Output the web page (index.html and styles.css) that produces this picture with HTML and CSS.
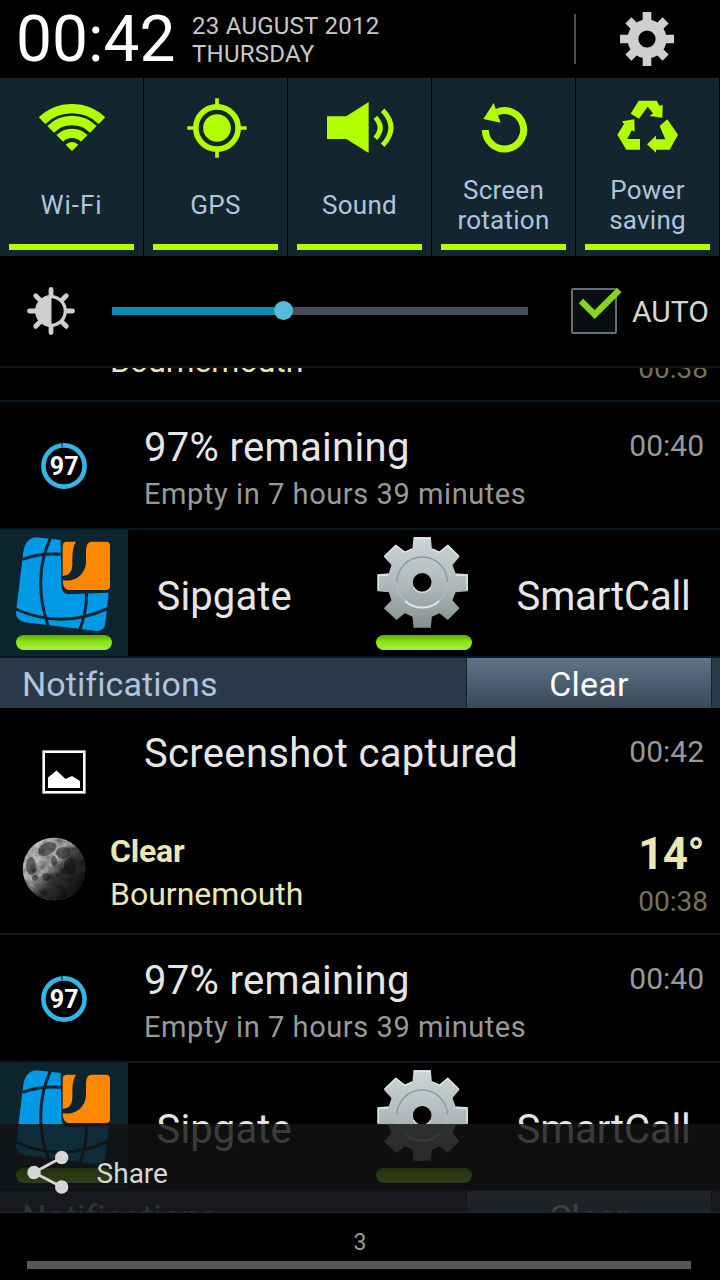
FILE: index.html
```html
<!DOCTYPE html>
<html lang="en">
<head>
<meta charset="utf-8">
<title>Notification panel</title>
<link rel="stylesheet" href="styles.css">
</head>
<body>
<svg class="defs" width="0" height="0">
  <defs>
    <linearGradient id="metal" x1="0" y1="0" x2="0" y2="1">
      <stop offset="0" stop-color="#ccd6d6"/>
      <stop offset="0.5" stop-color="#b2bbbb"/>
      <stop offset="1" stop-color="#849090"/>
    </linearGradient>
    <linearGradient id="moonShade" x1="0.2" y1="0.15" x2="0.85" y2="0.8">
      <stop offset="0" stop-color="#000" stop-opacity="0"/>
      <stop offset="0.4" stop-color="#000" stop-opacity="0.15"/>
      <stop offset="0.62" stop-color="#000" stop-opacity="0.72"/>
      <stop offset="1" stop-color="#000" stop-opacity="0.88"/>
    </linearGradient>
    <filter id="crust" x="0" y="0" width="1" height="1">
      <feTurbulence type="fractalNoise" baseFrequency="0.11" numOctaves="4" seed="8"/>
      <feColorMatrix values="0.9 0 0 0 -0.06  0.9 0 0 0 -0.06  0.9 0 0 0 -0.05  0 0 0 0 1"/>
      <feComposite in2="SourceGraphic" operator="in"/>
    </filter>
    <symbol id="battery" viewBox="0 0 48 48">
      <circle cx="24" cy="24" r="20.6" fill="none" stroke="#33b5e5" stroke-width="4.6"/>
      <path d="M22 .5v4.8" stroke="#0c2c3a" stroke-width="1"/>
      <text x="24.2" y="32.7" class="battery-level">97</text>
    </symbol>
    <symbol id="moon" viewBox="0 0 64 64">
      <circle cx="32" cy="32" r="31.3" fill="#888" filter="url(#crust)"/>
      <g fill="#1c1c1e" fill-opacity="0.5">
        <ellipse cx="25" cy="12" rx="10" ry="6" transform="rotate(-25 25 12)"/>
        <ellipse cx="9" cy="29" rx="5" ry="9"/>
        <ellipse cx="41" cy="16" rx="7" ry="6"/>
        <ellipse cx="24" cy="40" rx="4" ry="4"/>
        <ellipse cx="13" cy="41" rx="3" ry="3"/>
        <ellipse cx="32" cy="24" rx="3" ry="5"/>
        <ellipse cx="48" cy="29" rx="6" ry="9"/>
      </g>
      <g fill="#d8d8d8" fill-opacity="0.55">
        <circle cx="13" cy="20" r="1.6"/><circle cx="20" cy="27" r="1.6"/><circle cx="29" cy="29" r="1.5"/>
        <circle cx="10" cy="48" r="1.5"/><circle cx="23" cy="22" r="1.2"/><circle cx="34" cy="19" r="1"/>
        <circle cx="20" cy="34" r="1.6"/><circle cx="30" cy="35" r="1.2"/><circle cx="16" cy="14" r="1"/>
      </g>
      <circle cx="32" cy="32" r="31.5" fill="url(#moonShade)"/>
      <path d="M4 22A30 30 0 0 1 45 4" fill="none" stroke="#bbb" stroke-opacity="0.45" stroke-width="1"/>
    </symbol>
    <symbol id="sipgate" viewBox="0 0 384 378">
      <path fill="#0099e6" d="M108 22L182 30L184 165Q186 192 205 193L326 188L316 280Q313 303 290 303L75 277Q48 271 48 247L70 65Q77 25 108 22Z"/>
      <path fill="none" stroke="#0c242d" stroke-width="9" d="M68 88Q120 69 182 73M152 22Q94 150 148 297M46 237Q185 299 324 235M260 188Q259 256 237 304"/>
      <path fill="#ff8800" d="M199 35H228Q217 52 217 85V105Q216 137 188 138V48Q188 36 199 35Z"/>
      <path fill="#ff8800" d="M258 60Q258 35 276 35H318Q330 35 330 47V168Q330 180 318 180H204Q188 176 188 151Q215 155 236 140Q258 122 258 95Z"/>
    </symbol>
    <symbol id="smartcall" viewBox="1.5 -1 384 378">
      <path fill="url(#metal)" fill-rule="evenodd" d="M162 21H214L217 54L240 64L265 43L300 79L279 104L288 129L325 132V183L288 186L279 210L300 234L265 269L240 249L217 259L214 292H162L159 259L136 249L111 269L73 234L96 210L88 186L54 183V132L88 129L96 104L73 79L108 43L136 64L159 54ZM188 128A28 28 0 1 0 188 184A28 28 0 1 0 188 128Z"/>
      <path fill="none" stroke="#e2efef" stroke-width="4" d="M163 23H213M219 56L240 66L265 45L298 78M157 56L136 66L109 45L75 78M290 134H323V180M86 134H56V180"/>
      <path fill="none" stroke="#8d9898" stroke-width="4" d="M112 156A76 76 0 0 1 264 156"/>
      <path fill="none" stroke="#b8c2c2" stroke-width="3" d="M112 156A76 76 0 0 0 264 156"/>
      <path fill="none" stroke="#dfe6e6" stroke-width="6" d="M137 212A76 76 0 0 0 239 212"/>
      <path fill="none" stroke="#d8e0e0" stroke-width="4" d="M162 170A29 29 0 0 0 214 170"/>
    </symbol>
  </defs>
</svg>

<div class="screen">
  <header class="header">
    <div class="clock">00:42</div>
    <div class="date"><div class="day">23 AUGUST 2012</div><div class="weekday">THURSDAY</div></div>
    <div class="divider"></div>
    <svg class="settings" viewBox="-28 -28 56 56">
      <path fill="#cfcfcf" fill-rule="evenodd" d="M0-19.5A19.5 19.5 0 0 1 0 19.5A19.5 19.5 0 0 1 0-19.5ZM0-8.6A8.6 8.6 0 0 0 0 8.6A8.6 8.6 0 0 0 0-8.6Z"/>
      <path stroke="#cfcfcf" stroke-width="8.6" d="M0-27V-15M0 27V15M-27 0H-15M27 0H15M-18.6-18.6L-11-11M18.6-18.6L11-11M-18.6 18.6L-11 11M18.6 18.6L11 11"/>
    </svg>
  </header>

  <section class="tiles">
    <div class="tile">
      <svg class="tile-icon" viewBox="0 0 429 291">
        <g fill="none" stroke="#b2ff00" stroke-width="28">
          <path d="M126 128A130 130 0 0 1 306 128"/>
          <path d="M152 154A90.5 90.5 0 0 1 280 154"/>
          <path d="M179.200 181.200A52 52 0 0 1 252.800 181.200"/>
        </g>
        <path fill="#b2ff00" d="M216 219L197 200A27 27 0 0 1 235 200Z"/>
      </svg>
      <div class="tile-label wifi">Wi-Fi</div><div class="tile-bar"></div>
    </div>
    <div class="tile">
      <svg class="tile-icon" viewBox="0 0 429 291">
        <g fill="none" stroke="#b2ff00">
          <circle cx="219" cy="150" r="63.500" stroke-width="17"/>
          <path stroke-width="11" d="M219 61V85M219 215V239M130 150H154M284 150H308"/>
        </g>
        <circle cx="219" cy="150" r="41.500" fill="#b2ff00"/>
      </svg>
      <div class="tile-label">GPS</div><div class="tile-bar"></div>
    </div>
    <div class="tile">
      <svg class="tile-icon" viewBox="0 0 429 291">
        <path fill="#b2ff00" d="M117 115H175L242 72V225L175 183H117Z"/>
        <g fill="none" stroke="#b2ff00" stroke-width="15">
          <path d="M262 118Q291 149 262 181"/>
          <path d="M284 97Q334 149 284 202"/>
        </g>
      </svg>
      <div class="tile-label">Sound</div><div class="tile-bar"></div>
    </div>
    <div class="tile">
      <svg class="tile-icon" viewBox="0 0 429 291">
        <path fill="none" stroke="#b2ff00" stroke-width="21" d="M160 156A57.500 57.500 0 1 0 194 103"/>
        <path fill="#b2ff00" d="M185 75L206 134L154 123Z"/>
      </svg>
      <div class="tile-label">Screen<br>rotation</div><div class="tile-bar"></div>
    </div>
    <div class="tile">
      <svg class="tile-icon" viewBox="864 0 429 291">
        <g fill="#b2ff00">
          <path d="M1052 68H1106L1115 84L1124 80L1123 119L1085 114L1095 106L1079 86L1053 122L1028 107Z"/>
          <path d="M1002 130L1039 124L1040 161L1031 157L1018 183H1056V215H1015L988 170L1008 138Z"/>
          <path d="M1138 124L1170 170L1145 215H1104V224L1077 199L1104 173V184H1132L1115 144Z"/>
        </g>
      </svg>
      <div class="tile-label">Power<br>saving</div><div class="tile-bar"></div>
    </div>
  </section>

  <section class="brightness">
    <svg class="sun" viewBox="-25 -25 50 50">
      <circle r="14.300" fill="none" stroke="#cfcfcf" stroke-width="3.300"/>
      <path fill="#cfcfcf" d="M.5-15A15 15 0 0 0 .5 15Z"/>
      <path stroke="#cfcfcf" stroke-width="4.800" stroke-linecap="round" d="M0-21.500V-16M0 21.500V16M-21.500 0H-16M21.500 0H16M-15.300-15.300L-11-11M15.300-15.300L11-11M-15.300 15.300L-11 11M15.300 15.300L11 11"/>
    </svg>
    <div class="slider"><div class="slider-fill"></div><div class="thumb"></div></div>
    <svg class="checkbox" viewBox="0 0 52 48">
      <rect x="1" y="2" width="44" height="44" rx="1" fill="#0a0e11" stroke="#656d76" stroke-width="2"/>
      <path fill="none" stroke="#86d41c" stroke-width="6.300" d="M10 14L23.700 27.500L48.300 3"/>
    </svg>
    <div class="auto">AUTO</div>
  </section>

  <main class="list">
    <div class="row weather scrolled">
      <svg class="moon"><use href="#moon"/></svg>
      <div class="place"><div class="condition">Clear</div><div class="city">Bournemouth</div></div>
      <div class="reading"><div class="degrees">14°</div><div class="updated">00:38</div></div>
    </div>
    <div class="row notice">
      <svg class="notice-icon"><use href="#battery"/></svg>
      <div class="notice-text"><div class="title">97% remaining</div><div class="detail">Empty in 7 hours 39 minutes</div></div>
      <div class="time">00:40</div>
    </div>
    <div class="row toggles">
      <div class="toggle"><div class="toggle-icon shaded"><svg class="app"><use href="#sipgate"/></svg><div class="pill"></div></div><div class="toggle-name">Sipgate</div></div>
      <div class="toggle"><div class="toggle-icon"><svg class="app"><use href="#smartcall"/></svg><div class="pill"></div></div><div class="toggle-name tight">SmartCall</div></div>
    </div>
    <div class="heading"><div class="heading-text">Notifications</div><div class="clear">Clear</div></div>
    <div class="notice">
      <svg class="notice-icon" viewBox="0 0 48 48">
        <rect x="3.700" y="3.700" width="40.600" height="40.600" fill="none" stroke="#fff" stroke-width="2.600"/>
        <path fill="#fff" d="M8 40V29.500L16.500 22.500L25.500 31L32 28L40 33V40Z"/>
      </svg>
      <div class="notice-text"><div class="title">Screenshot captured</div></div>
      <div class="time">00:42</div>
    </div>
    <div class="row weather">
      <svg class="moon"><use href="#moon"/></svg>
      <div class="place"><div class="condition">Clear</div><div class="city">Bournemouth</div></div>
      <div class="reading"><div class="degrees">14°</div><div class="updated">00:38</div></div>
    </div>
    <div class="row notice">
      <svg class="notice-icon"><use href="#battery"/></svg>
      <div class="notice-text"><div class="title">97% remaining</div><div class="detail">Empty in 7 hours 39 minutes</div></div>
      <div class="time">00:40</div>
    </div>
    <div class="row toggles">
      <div class="toggle"><div class="toggle-icon shaded"><svg class="app"><use href="#sipgate"/></svg><div class="pill"></div></div><div class="toggle-name">Sipgate</div></div>
      <div class="toggle"><div class="toggle-icon"><svg class="app"><use href="#smartcall"/></svg><div class="pill"></div></div><div class="toggle-name tight">SmartCall</div></div>
    </div>
    <div class="heading"><div class="heading-text">Notifications</div><div class="clear">Clear</div></div>
    <div class="share">
      <svg class="share-icon" viewBox="0 0 48 48">
        <path fill="none" stroke="#d6d6d6" stroke-width="2.800" d="M37.700 9.500L10 24.500L37.700 39"/>
        <g fill="#d6d6d6"><circle cx="37.700" cy="9.500" r="6.700"/><circle cx="10" cy="24.500" r="6.700"/><circle cx="37.700" cy="39" r="6.700"/></g>
      </svg>
      <div class="share-label">Share</div>
    </div>
  </main>

  <footer class="footer">
    <div class="carrier">3</div>
    <div class="handle"></div>
  </footer>
</div>
</body>
</html>
```
FILE: styles.css
```css
* { box-sizing: border-box; }
body { margin: 0; background: #000; }
svg { display: block; flex: none; }
.defs { position: absolute; }

.screen {
  width: 720px; height: 1280px; overflow: hidden;
  display: flex; flex-direction: column;
  background: #000; color: #e6e6e6;
  font-family: Roboto, "Liberation Sans", sans-serif;
  white-space: nowrap;
}

.header { height: 78px; display: flex; flex: none; padding-left: 16px; }
.clock { width: 176px; font-size: 64px; line-height: 80px; color: #fff; }
.date { width: 382px; padding-top: 12px; font-size: 24px; line-height: 28px; letter-spacing: 0.25px; color: #c8c8c8; }
.divider { width: 2px; height: 50px; margin-top: 14px; background: #44505a; }
.settings { width: 56px; height: 56px; margin: 11.300px 0 0 43px; }

.tiles { height: 178px; flex: none; display: flex; }
.tile { width: 144px; border-right: 1px solid #000; background: #132630; }
.tile-icon { width: 143px; height: 97px; }
.tile-label {
  height: 60px; display: flex; align-items: center; justify-content: center;
  text-align: center;
  font-size: 26px; line-height: 30px; letter-spacing: 0.250px; color: #b0c4de;
}
.wifi { letter-spacing: 0.900px; }
.tile-bar { width: 125px; height: 6px; margin: 9px 0 0 9px; background: #b2ff00; }

.brightness {
  height: 112px; flex: none; display: flex; align-items: center;
  padding-left: 26px; border-bottom: 2px solid #0a1821;
}
.sun { width: 50px; height: 50px; margin-top: 0; }
.slider { position: relative; width: 416px; height: 8px; margin-left: 36px; background: #454e54; }
.slider-fill { width: 171px; height: 8px; background: #0e8cb0; }
.thumb { position: absolute; left: 161.500px; top: -6px; width: 19px; height: 19px; border-radius: 50%; background: #55bbd8; }
.checkbox { width: 52px; height: 48px; margin-left: 43px; }
.auto { margin: 1px 0 0 9px; font-size: 30px; line-height: 40px; color: #d6d6d6; }

.list { position: relative; height: 845px; flex: none; overflow: hidden; border-bottom: 1px solid #1b2833; }
.row { border-bottom: 2px solid #0a1821; }

.weather { height: 99px; display: flex; padding: 0 12px 0 22px; color: #ebe6b4; }
.scrolled { margin-top: -65px; }
.moon { width: 64px; height: 64px; margin-top: 1px; }
.place { flex: 1; padding-left: 24px; font-size: 32px; line-height: 43px; }
.condition { margin-top: -6px; font-weight: bold; letter-spacing: -0.200px; }
.reading { text-align: right; }
.degrees { height: 49px; margin: -7px 4px 0 0; font-size: 44px; line-height: 50px; font-weight: bold; letter-spacing: -0.600px; }
.updated { font-size: 28px; line-height: 48px; color: #75735a; }

.notice { height: 128px; display: flex; }
.notice-icon { width: 48px; height: 48px; margin: 40px 0 0 40px; }
.battery-level { font: bold 25px Roboto, "Liberation Sans", sans-serif; fill: #fff; text-anchor: middle; }
.notice-text { flex: 1; padding: 21px 0 0 56px; }
.title { font-size: 40px; line-height: 50px; letter-spacing: 0.320px; }
.detail { margin-top: -1px; font-size: 29px; line-height: 44px; letter-spacing: 0.570px; color: #999; }
.time { padding: 24px 16px 0 0; font-size: 30px; line-height: 40px; color: #999; }

.toggles { height: 128px; display: flex; }
.toggle { width: 360px; display: flex; }
.toggle-icon { width: 128px; height: 126px; }
.shaded { background: #0c242d; }
.app { width: 128px; height: 126px; }
.pill {
  width: 96px; height: 15px; margin: -21px 0 0 16px; position: relative; border-radius: 7.500px;
  background: linear-gradient(#5fa804, #86e00e 40%, #a8ee4c);
}
.toggle-name { padding-left: 28.600px; font-size: 40px; line-height: 134px; height: 126px; letter-spacing: 0.100px; }
.tight { letter-spacing: -0.150px; }

.heading { height: 50px; display: flex; background: #2a3947; }
.heading-text { width: 466px; padding-left: 22px; font-size: 34px; line-height: 52px; letter-spacing: 0.080px; color: #b0c4de; }
.clear {
  width: 246px; text-align: center; font-size: 34px; line-height: 52px; letter-spacing: 0.200px; color: #fff;
  background: linear-gradient(#5f748a, #3a4955);
  border-left: 1px solid #17222b; border-right: 1px solid #17222b;
}

.share {
  position: absolute; left: 0; bottom: 0; width: 720px; height: 88px;
  display: flex; background: rgba(18, 18, 18, 0.81); color: #d6d6d6;
}
.share-icon { width: 48px; height: 48px; margin: 24px 0 0 24px; }
.share-label { padding: 30px 0 0 24.600px; font-size: 28px; line-height: 40px; }

.footer { height: 67px; flex: none; }
.carrier { height: 48px; padding-top: 10px; text-align: center; font-size: 23px; line-height: 40px; color: #999; }
.handle { width: 664px; height: 8px; margin-left: 27px; background: #575757; }
```
